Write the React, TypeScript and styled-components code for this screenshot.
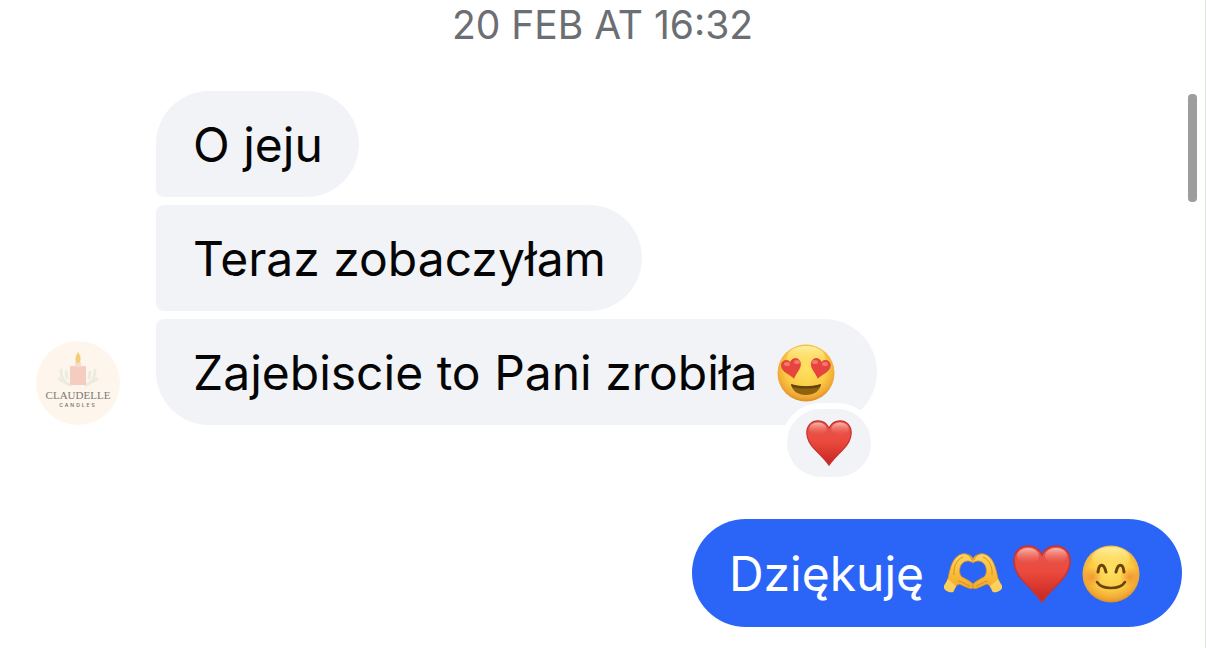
import React from "react";
import styled, { createGlobalStyle } from "styled-components";

const GlobalStyle = createGlobalStyle`
  body {
    margin: 0;
    background: #ffffff;
  }
  * {
    box-sizing: border-box;
  }
`;

const Page = styled.main`
  position: relative;
  display: flex;
  flex-direction: column;
  min-height: 100vh;
  padding-bottom: 20px;
  border-right: 1px solid #e4e8e4;
  font-family: Inter, "Liberation Sans", sans-serif;
  color: #050505;
`;

const Timestamp = styled.time`
  display: block;
  height: 91px;
  line-height: 50px;
  font-size: 39px;
  text-align: center;
  color: #6b6e72;
`;

const IncomingGroup = styled.section`
  display: flex;
  align-items: flex-end;
  gap: 36px;
  padding-left: 36px;
`;

const Thread = styled.div`
  display: flex;
  flex-direction: column;
  align-items: flex-start;
  gap: 8px;
`;

type Shape = "first" | "middle" | "last" | "single";

const radii: Record<Shape, string> = {
  first: "53px 53px 53px 8px",
  middle: "8px 53px 53px 8px",
  last: "8px 53px 53px 53px",
  single: "54px",
};

const Bubble = styled.div<{ $shape: Shape; $own?: boolean }>`
  position: relative;
  display: flex;
  align-items: center;
  gap: 20px;
  min-height: ${(p) => (p.$own ? 108 : 106)}px;
  padding: 2px 36px 0 37px;
  border-radius: ${(p) => radii[p.$shape]};
  background: ${(p) => (p.$own ? "#2b65f8" : "#f1f3f6")};
  color: ${(p) => (p.$own ? "#ffffff" : "#050505")};
  font-size: 48px;
  line-height: 60px;
  white-space: nowrap;
`;

const EmojiRow = styled.span`
  display: flex;
  gap: 11px;
  margin-right: 6px;
`;

const Emoji = styled.svg<{ $size: number }>`
  display: block;
  flex: none;
  width: ${(p) => p.$size}px;
  height: ${(p) => p.$size}px;
`;

const Reaction = styled.button`
  position: absolute;
  right: 0;
  bottom: -58px;
  display: flex;
  align-items: center;
  justify-content: center;
  width: 96px;
  height: 80px;
  padding: 0;
  border: 6px solid #ffffff;
  border-radius: 40px;
  background: #f1f3f6;
`;

const OutgoingGroup = styled.section`
  display: flex;
  justify-content: flex-end;
  margin-top: 94px;
  padding-right: 23px;
`;

const Avatar = styled.div`
  display: flex;
  flex: none;
  flex-direction: column;
  align-items: center;
  width: 84px;
  height: 84px;
  padding-top: 10px;
  border-radius: 50%;
  background: #fef6ec;
  color: #7d7874;
`;

const Candle = styled.svg`
  display: block;
  width: 44px;
  height: 38px;
`;

const BrandName = styled.span`
  font-family: "Liberation Serif", serif;
  font-size: 11px;
  line-height: 13px;
`;

const BrandLine = styled.span`
  font-size: 5px;
  line-height: 7px;
  font-weight: 600;
  letter-spacing: 2px;
`;

const ScrollThumb = styled.div`
  position: absolute;
  top: 94px;
  right: 8px;
  width: 9px;
  height: 108px;
  border-radius: 4px;
  background: #9d9d9d;
`;

const HEART =
  "M29 57 C25 51 19 45 12 38 C5 31 1 25 1 16 C1 7 7 1 15 1 C21 1 26 4 29 10 C32 4 37 1 43 1 C51 1 57 7 57 16 C57 25 53 31 46 38 C39 45 33 51 29 57 Z";

function Heart({ size, id }: { size: number; id: string }) {
  return (
    <Emoji $size={size} viewBox="0 0 58 58" role="img" aria-label="Red heart">
      <defs>
        <linearGradient id={id} x1="0" y1="0" x2="0" y2="1">
          <stop offset="0" stopColor="#e2584f" />
          <stop offset="0.45" stopColor="#ec4a3e" />
          <stop offset="1" stopColor="#c4251f" />
        </linearGradient>
        <linearGradient id={`${id}-shine`} x1="0" y1="0" x2="0" y2="1">
          <stop offset="0" stopColor="#ffc3b8" stopOpacity="0.9" />
          <stop offset="1" stopColor="#f4695c" stopOpacity="0" />
        </linearGradient>
      </defs>
      <path d={HEART} fill={`url(#${id})`} stroke="#c63430" strokeWidth="1.5" />
      <ellipse cx="15" cy="11" rx="11" ry="8" fill={`url(#${id}-shine)`} />
      <ellipse cx="43" cy="11" rx="11" ry="8" fill={`url(#${id}-shine)`} />
    </Emoji>
  );
}

function FaceBase({ id }: { id: string }) {
  return (
    <>
      <defs>
        <radialGradient id={id} cx="0.5" cy="0.42" r="0.6">
          <stop offset="0" stopColor="#ffe262" />
          <stop offset="0.6" stopColor="#fbcb45" />
          <stop offset="0.86" stopColor="#f0a733" />
          <stop offset="1" stopColor="#d58422" />
        </radialGradient>
        <linearGradient id={`${id}-shine`} x1="0" y1="0" x2="0" y2="1">
          <stop offset="0" stopColor="#fff6b0" stopOpacity="0.85" />
          <stop offset="1" stopColor="#ffe56a" stopOpacity="0" />
        </linearGradient>
      </defs>
      <circle cx="29" cy="29" r="28.5" fill={`url(#${id})`} />
      <ellipse cx="29" cy="13" rx="19" ry="11" fill={`url(#${id}-shine)`} />
    </>
  );
}

function HeartEyes() {
  return (
    <Emoji $size={58} viewBox="0 0 58 58" role="img" aria-label="Smiling face with heart eyes">
      <FaceBase id="face-love" />
      <g fill="#e8443f" stroke="#d23a38" strokeWidth="2">
        <path transform="translate(5 15) rotate(-12 10 10) scale(.34)" d={HEART} />
        <path transform="translate(33 15) rotate(12 10 10) scale(.34)" d={HEART} />
      </g>
      <g fill="#f88478" opacity="0.8">
        <ellipse cx="10" cy="20" rx="3" ry="2" />
        <ellipse cx="20" cy="18" rx="3" ry="2" />
        <ellipse cx="38" cy="18" rx="3" ry="2" />
        <ellipse cx="48" cy="20" rx="3" ry="2" />
      </g>
      <path d="M14 40 C23 43 35 43 44 40 C43 47 37 51 29 51 C21 51 15 47 14 40 Z" fill="#8f6212" />
      <path d="M14 40 C23 43 35 43 44 40 L43 43 C35 45 23 45 15 43 Z" fill="#64430d" />
    </Emoji>
  );
}

function Blush() {
  return (
    <Emoji $size={58} viewBox="0 0 58 58" role="img" aria-label="Smiling face with smiling eyes">
      <FaceBase id="face-blush" />
      <defs>
        <radialGradient id="cheek">
          <stop offset="0" stopColor="#f18a2c" stopOpacity="0.8" />
          <stop offset="1" stopColor="#f18a2c" stopOpacity="0" />
        </radialGradient>
      </defs>
      <ellipse cx="10" cy="32" rx="10" ry="10" fill="url(#cheek)" />
      <ellipse cx="48" cy="32" rx="10" ry="10" fill="url(#cheek)" />
      <g fill="none" stroke="#6a430c" strokeLinecap="round">
        <path d="M16 27 C17 18 22 18 24 27" strokeWidth="3" />
        <path d="M34 27 C36 18 41 18 42 27" strokeWidth="3" />
        <path d="M15 37 C20 45 38 45 43 37" strokeWidth="2.500" />
      </g>
    </Emoji>
  );
}

const HAND =
  "M0 41 C3 38 4 34 5 29 C7 20 10 11 18 9 C23 8 28 11 29 14 L29 18 C26 15 20 15 17 20 C15 24 15 29 18 32 C22 34 26 36 29 39 L29 43 C26 45 21 41 15 39 C12 40 11 43 9 47 Z";

function Hand() {
  return (
    <>
      <path d={HAND} fill="url(#skin)" stroke="#dc9124" strokeWidth="0.8" />
      <path d="M0 41 L4 34 L12 41 L9 47 C6 48 1 46 0 43 Z" fill="#fbd15e" />
      <path
        d="M10 30 C9 22 13 14 19 12 M22 9 C25 10 27 12 28 15 M14 36 C18 36 22 40 26 41"
        fill="none"
        stroke="#d98e22"
        strokeWidth="1"
      />
    </>
  );
}

function HeartHands() {
  return (
    <Emoji $size={58} viewBox="0 0 58 58" role="img" aria-label="Heart hands">
      <defs>
        <linearGradient id="skin" x1="0" y1="0" x2="0" y2="1">
          <stop offset="0" stopColor="#ffd560" />
          <stop offset="0.6" stopColor="#f9b935" />
          <stop offset="1" stopColor="#eda52e" />
        </linearGradient>
      </defs>
      <Hand />
      <g transform="translate(58 0) scale(-1 1)">
        <Hand />
      </g>
    </Emoji>
  );
}

function BrandAvatar() {
  return (
    <Avatar>
      <Candle viewBox="0 0 44 38" aria-hidden="true">
        <g fill="none" stroke="#eaece0" strokeWidth="3" strokeLinecap="round">
          <path d="M14 34 C8 32 5 26 5 19 M11 27 L10 21 M8 31 L3 28" />
          <path d="M30 34 C36 32 39 26 39 19 M33 27 L34 21 M36 31 L41 28" />
        </g>
        <rect x="14" y="15" width="16" height="19" rx="1" fill="#f5ccc0" />
        <rect x="19" y="11" width="6" height="5" fill="#f8dccb" />
        <path d="M22 1 C26 6 25 12 22 12 C19 12 18 7 22 1 Z" fill="#f4cd79" />
      </Candle>
      <BrandName>CLAUDELLE</BrandName>
      <BrandLine>CANDLES</BrandLine>
    </Avatar>
  );
}

export default function App() {
  return (
    <>
      <GlobalStyle />
      <Page>
        <Timestamp>20 FEB AT 16:32</Timestamp>
        <IncomingGroup>
          <BrandAvatar />
          <Thread>
            <Bubble $shape="first">O jeju</Bubble>
            <Bubble $shape="middle">Teraz zobaczyłam</Bubble>
            <Bubble $shape="last">
              <span>Zajebiscie to Pani zrobiła</span>
              <EmojiRow>
                <HeartEyes />
              </EmojiRow>
              <Reaction type="button" aria-label="Reactions">
                <Heart size={46} id="heart-reaction" />
              </Reaction>
            </Bubble>
          </Thread>
        </IncomingGroup>
        <OutgoingGroup>
          <Bubble $shape="single" $own>
            <span>Dziękuję</span>
            <EmojiRow>
              <HeartHands />
              <Heart size={58} id="heart-message" />
              <Blush />
            </EmojiRow>
          </Bubble>
        </OutgoingGroup>
        <ScrollThumb />
      </Page>
    </>
  );
}
